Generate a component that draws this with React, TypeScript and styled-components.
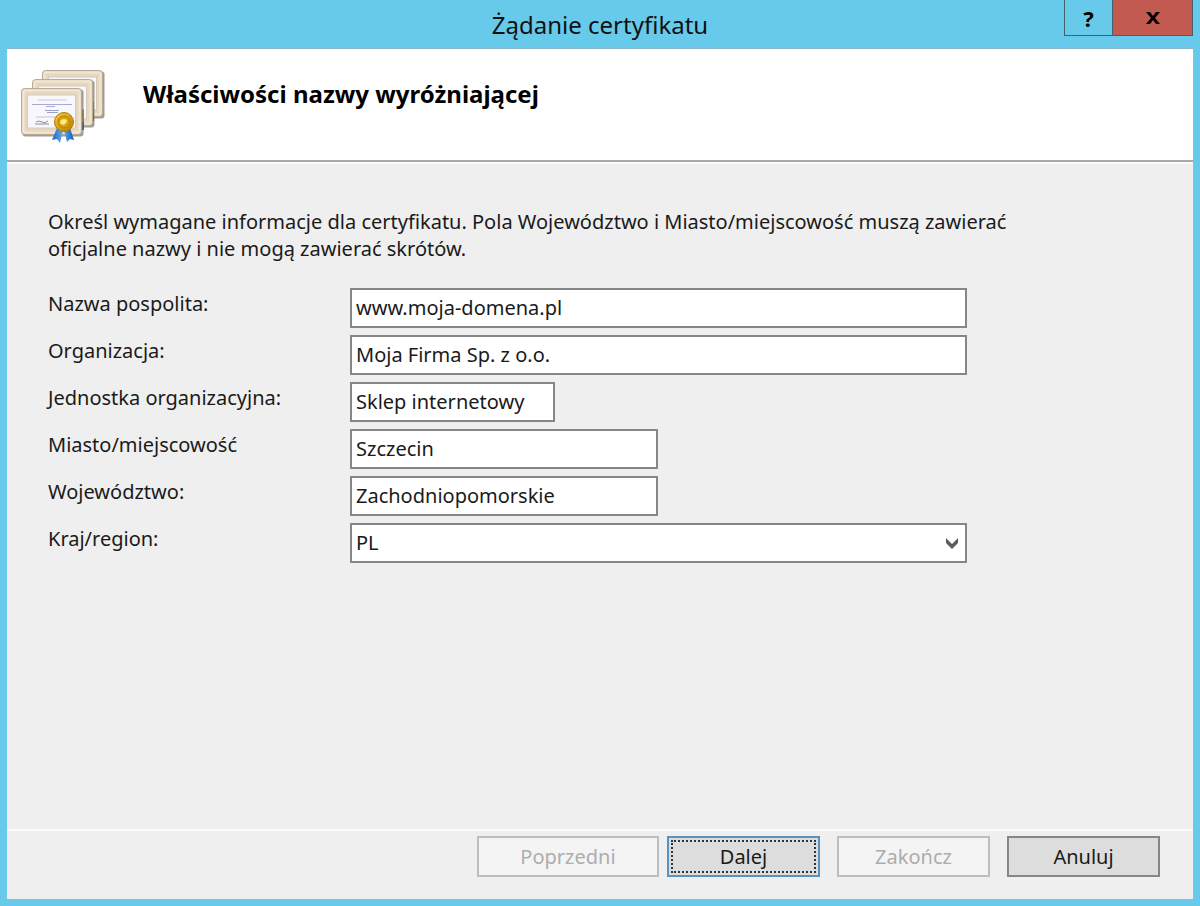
import React from "react";
import styled, { createGlobalStyle } from "styled-components";

const GlobalStyle = createGlobalStyle`
  *, *::before, *::after { box-sizing: border-box; }
  body { margin: 0; background: #67caea; }
  body, input, select, button {
    font-family: "Noto Sans", "Open Sans", sans-serif;
    font-size: 20px;
    color: #1a1a1a;
  }
`;

const Dialog = styled.div`
  min-height: 100vh;
  display: flex;
  flex-direction: column;
  padding: 0 7px 7px;
  background: #67caea;
`;

const TitleBar = styled.header`
  display: grid;
  grid-template-columns: 1fr auto 1fr;
  height: 48px;
`;

const Title = styled.h1`
  grid-column: 2;
  margin: 0;
  font-size: 24px;
  font-weight: 400;
  line-height: 50px;
  color: #111;
`;

const WindowControls = styled.div`
  display: flex;
  justify-content: flex-end;
`;

const WindowButton = styled.button<{ $close?: boolean }>`
  width: ${(p) => (p.$close ? 80 : 49)}px;
  height: 36px;
  padding: 0;
  display: flex;
  align-items: center;
  justify-content: center;
  border: 1px solid #41606c;
  border-top: 0;
  border-left-width: ${(p) => (p.$close ? 0 : 1)}px;
  background: ${(p) => (p.$close ? "#c35a50" : "#67caea")};
  color: #000;
  font-size: 22px;
  font-weight: 700;
  line-height: 34px;
`;

const Client = styled.main`
  flex: 1;
  display: flex;
  flex-direction: column;
  border-top: 1px solid #8eb4c8;
  background: #efefef;
`;

const Banner = styled.section`
  display: flex;
  height: 113px;
  padding: 20px 14px 0;
  gap: 38px;
  background: #fff;
  border-bottom: 2px solid #a9a9a9;
  box-shadow: 0 2px 0 #fafafa;
`;

const Heading = styled.h2`
  margin: 0;
  font-size: 24px;
  font-weight: 700;
  line-height: 50px;
  color: #000;
`;

const Form = styled.form`
  flex: 1;
  display: flex;
  flex-direction: column;
`;

const Fields = styled.div`
  flex: 1;
  padding: 46px 41px;
`;

const Intro = styled.p`
  max-width: 1000px;
  margin: 0 0 26px;
  line-height: 27px;
`;

const Row = styled.div`
  display: grid;
  grid-template-columns: 302px minmax(0, 617px);
  margin-bottom: 7px;
`;

const Label = styled.label`
  line-height: 32px;
`;

const TextField = styled.input<{ $width: string }>`
  width: ${(p) => p.$width};
  height: 40px;
  padding: 0 4px 2px;
  border: 2px solid #868686;
  border-radius: 0;
  background: #fff;
`;

const SelectWrap = styled.div`
  position: relative;
`;

const Select = styled.select`
  appearance: none;
  width: 100%;
  height: 40px;
  padding: 0 32px 2px 4px;
  border: 2px solid #868686;
  border-radius: 0;
  background: #fff;
`;

const Chevron = styled.svg`
  position: absolute;
  right: 8px;
  top: 15px;
  pointer-events: none;
`;

const Footer = styled.footer`
  display: flex;
  justify-content: flex-end;
  gap: 17px;
  padding: 5px 33px 22px;
  border-top: 2px solid #fcfcfc;
`;

const NavPair = styled.div`
  display: flex;
  gap: 8px;
`;

const ActionButton = styled.button<{ $wide?: boolean; $primary?: boolean }>`
  width: ${(p) => (p.$wide ? 182 : 153)}px;
  height: 41px;
  padding: ${(p) => (p.$primary ? 2 : 0)}px;
  border: 2px solid ${(p) => (p.$primary ? "#5b93c0" : "#868686")};
  background: #dddddd;
  line-height: 31px;
  &:disabled {
    border-color: #b9bec2;
    background: #f4f4f4;
    color: #adadad;
  }
`;

const FocusRing = styled.span`
  display: block;
  height: 33px;
  border: 2px dotted #333;
  line-height: 29px;
`;

function Certificate({ x, y }: { x: number; y: number }) {
  return (
    <g transform={`translate(${x} ${y})`}>
      <rect x="1.5" y="1.5" width="61" height="47" rx="3" fill="#77736c" opacity=".7" />
      <rect x=".5" y=".5" width="60" height="46" rx="3" fill="#e6d8c0" stroke="#b9aa92" />
      <rect x="2.5" y="2.5" width="56" height="42" rx="2" fill="none" stroke="#f1e6d4" strokeWidth="2" />
      <rect x="6.5" y="7" width="48" height="33" fill="#f7f7fc" stroke="#d5cab9" />
    </g>
  );
}

function CertificatesIcon() {
  return (
    <svg width="84" height="76" viewBox="0 0 84 76" aria-hidden="true">
      <defs>
        <linearGradient id="gold" x1="0" y1="0" x2="1" y2="1">
          <stop offset="0" stopColor="#f3ce35" />
          <stop offset="1" stopColor="#b97c00" />
        </linearGradient>
        <linearGradient id="ribbon" x1="0" y1="0" x2="1" y2="0">
          <stop offset="0" stopColor="#2163bd" />
          <stop offset=".5" stopColor="#69aef0" />
          <stop offset="1" stopColor="#1557b4" />
        </linearGradient>
      </defs>
      <Certificate x={21} y={1} />
      <path d="M70 31l3 2v13h-3z" fill="#bd8b17" />
      <path d="M70 44h3v8h-3z" fill="#20529a" />
      <Certificate x={11} y={10} />
      <path d="M60 39l3 2v13h-3z" fill="#bd8b17" />
      <path d="M60 53h3v8h-3z" fill="#20529a" />
      <Certificate x={0} y={19} />
      <g fill="none">
        <path d="M17 31h29" stroke="#c9c9de" />
        <path d="M11 35.500h40M25 37.500h9" stroke="#a9aad2" />
        <path d="M24 41.500h14M26 43.500h11" stroke="#9c9dca" />
        <path d="M15 48h25" stroke="#c3c3da" />
        <path d="M15 53q3-2 6 0t6-1M14 55h14" stroke="#8f8fa2" />
      </g>
      <path d="M36 59l-5 12 5-1 3 4 3-12zM43 61l3 12 3-3 4 1-4-12z" fill="url(#ribbon)" />
      <circle cx="43" cy="53" r="9.500" fill="url(#gold)" stroke="#b17a05" />
      <circle cx="43" cy="53" r="6" fill="#d79e0c" stroke="#b97f00" />
      <path d="M39 54q0-4 4-4l3 1q0 4-4 5z" fill="#fae98d" stroke="#f5cf4f" />
    </svg>
  );
}

const FIELDS = [
  { id: "cn", label: "Nazwa pospolita:", value: "www.moja-domena.pl", width: "100%" },
  { id: "org", label: "Organizacja:", value: "Moja Firma Sp. z o.o.", width: "100%" },
  { id: "unit", label: "Jednostka organizacyjna:", value: "Sklep internetowy", width: "205px" },
  { id: "city", label: "Miasto/miejscowość", value: "Szczecin", width: "308px" },
  { id: "state", label: "Województwo:", value: "Zachodniopomorskie", width: "308px" },
];

export default function App() {
  return (
    <>
      <GlobalStyle />
      <Dialog>
        <TitleBar>
          <Title>Żądanie certyfikatu</Title>
          <WindowControls>
            <WindowButton type="button">?</WindowButton>
            <WindowButton type="button" $close aria-label="Zamknij">
              <svg width="16" height="14" viewBox="0 0 16 14" aria-hidden="true">
                <path d="M1 1h4l3 4 3-4h4l-5 6 5 6h-4l-3-4-3 4H1l5-6z" fill="#000" />
              </svg>
            </WindowButton>
          </WindowControls>
        </TitleBar>
        <Client>
          <Banner>
            <CertificatesIcon />
            <Heading>Właściwości nazwy wyróżniającej</Heading>
          </Banner>
          <Form onSubmit={(e) => e.preventDefault()}>
            <Fields>
              <Intro>
                Określ wymagane informacje dla certyfikatu. Pola Województwo i Miasto/miejscowość muszą zawierać
                oficjalne nazwy i nie mogą zawierać skrótów.
              </Intro>
              {FIELDS.map((f) => (
                <Row key={f.id}>
                  <Label htmlFor={f.id}>{f.label}</Label>
                  <TextField id={f.id} type="text" defaultValue={f.value} $width={f.width} />
                </Row>
              ))}
              <Row>
                <Label htmlFor="country">Kraj/region:</Label>
                <SelectWrap>
                  <Select id="country" defaultValue="PL">
                    <option>PL</option>
                  </Select>
                  <Chevron width="14" height="12" viewBox="0 0 14 12" aria-hidden="true">
                    <path d="M1 0l6 6 6-6v5l-6 6-6-6z" fill="#5c5c5c" />
                  </Chevron>
                </SelectWrap>
              </Row>
            </Fields>
            <Footer>
              <NavPair>
                <ActionButton type="button" $wide disabled>Poprzedni</ActionButton>
                <ActionButton type="submit" $primary>
                  <FocusRing>Dalej</FocusRing>
                </ActionButton>
              </NavPair>
              <ActionButton type="button" disabled>Zakończ</ActionButton>
              <ActionButton type="button">Anuluj</ActionButton>
            </Footer>
          </Form>
        </Client>
      </Dialog>
    </>
  );
}
